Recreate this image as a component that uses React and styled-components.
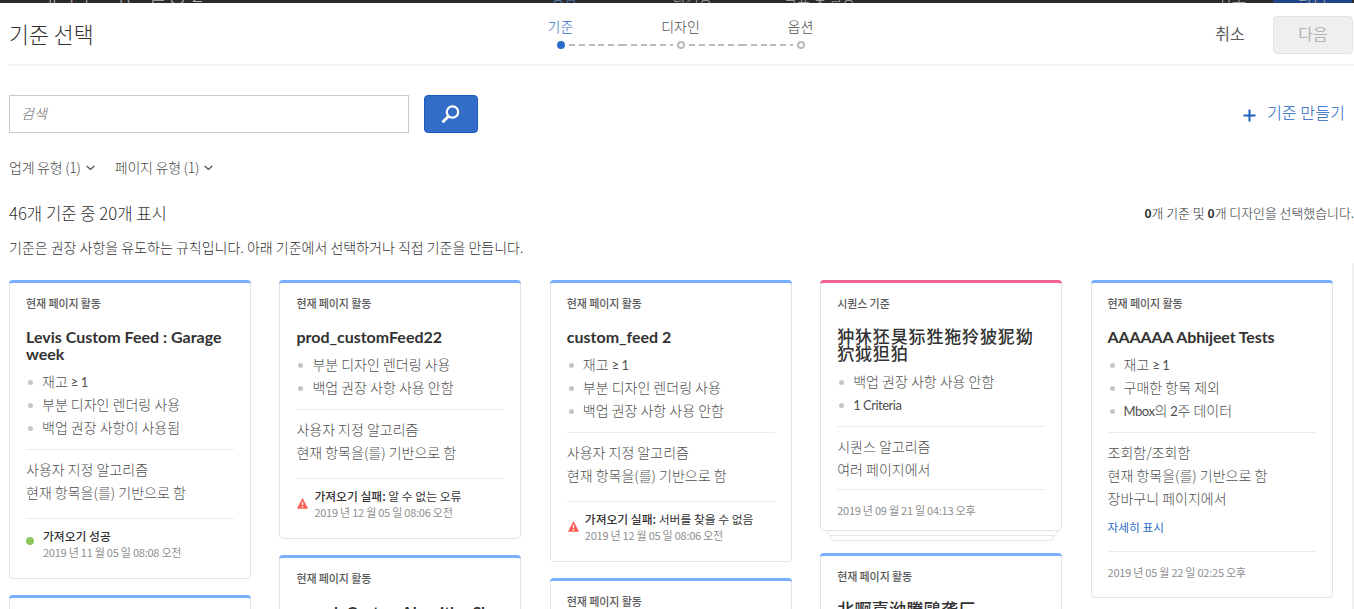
import React from 'react';
import styled, { createGlobalStyle } from 'styled-components';

const Global = createGlobalStyle`
  *, *::before, *::after { box-sizing: border-box; }
  html, body { margin: 0; height: 609px; overflow: hidden; background: #fff; }
  body { font-family: "Noto Sans CJK KR", sans-serif; font-size: 14px; color: #323232; }
`;

const Page = styled.div`
  height: 609px;
  width: 1354px;
  overflow: hidden;
  display: flex;
  flex-direction: column;
`;

const Backdrop = styled.div`
  height: 3px;
  flex: none;
  overflow: hidden;
  background: #2b2b2b;
  display: grid;
  grid-template-rows: 3px;
  grid-template-columns: 38px 513px 122px 111px 433px 56px 79px;
  align-items: end;
`;
const BackdropText = styled.span`
  margin-bottom: -1px;
  font-size: ${(p) => p.$size || 14}px;
  line-height: 1;
  font-weight: 300;
  white-space: nowrap;
  color: ${(p) => (p.$active ? '#5b8fd8' : '#b0b0b0')};
`;
const BackdropButton = styled.div`
  height: 3px;
  overflow: hidden;
  background: #1e4585;
  display: flex;
  align-items: flex-end;
  justify-content: center;
`;

const Header = styled.header`
  height: 63px;
  flex: none;
  margin-left: 9px;
  border-bottom: 2px solid #f3f3f3;
  display: grid;
  grid-template-columns: 1fr 360px 1fr;
`;
const Heading = styled.h1`
  margin: 0;
  font-size: 21.7px;
  font-weight: 300;
  line-height: 62px;
`;
const Steps = styled.ol`
  margin: 0 0 0 -1px;
  padding: 13px 0 0;
  list-style: none;
  display: grid;
  grid-template-columns: repeat(3, 120px);
`;
const Step = styled.li`
  display: flex;
  flex-direction: column;
  align-items: center;
  font-size: 14px;
  line-height: 20px;
  font-weight: 300;
  color: ${(p) => (p.$active ? '#2c6cc9' : '#4b4b4b')};
`;
const Track = styled.div`
  width: 100%;
  height: 8px;
  margin-top: 5px;
  display: grid;
  grid-template-columns: 1fr 8px 1fr;
  align-items: center;
`;
const Dash = styled.span`
  height: 2px;
  margin: ${(p) => (p.$before ? '0 4px 0 0' : '0 0 0 4px')};
  background: ${(p) =>
    p.$hidden ? 'none' : 'repeating-linear-gradient(90deg, #bdbdbd 0 6px, transparent 6px 9.8px)'};
`;
const Dot = styled.span`
  width: 8px;
  height: 8px;
  border-radius: 50%;
  border: 2px solid ${(p) => (p.$active ? '#2c6cc9' : '#b9b9b9')};
  background: ${(p) => (p.$active ? '#2c6cc9' : '#fff')};
`;
const Actions = styled.div`
  display: flex;
  justify-content: flex-end;
  padding: 13px 1px 0 0;
`;
const Button = styled.button`
  height: 38px;
  width: ${(p) => p.$w}px;
  padding: 0 0 4px;
  font-family: inherit;
  font-size: 16px;
  color: ${(p) => (p.$disabled ? '#b3b3b3' : '#5a5a5a')};
  background: ${(p) => (p.$disabled ? '#efefef' : 'transparent')};
  border: 1px solid ${(p) => (p.$disabled ? '#e2e2e2' : 'transparent')};
  border-radius: 4px;
`;

const Toolbar = styled.div`
  height: 38px;
  flex: none;
  margin: 29px 9px 0 9px;
  display: flex;
  align-items: center;
`;
const Search = styled.div`
  width: 400px;
  height: 38px;
  padding-left: 11px;
  border: 1px solid #cacaca;
  line-height: 35px;
  font-size: 14px;
  font-weight: 300;
  font-style: italic;
  color: #6e6e6e;
`;
const SearchButton = styled.button`
  width: 54px;
  height: 38px;
  margin-left: 15px;
  padding: 0;
  border: 1px solid #1d5bbd;
  border-radius: 4px;
  background: #326ec8;
  display: flex;
  align-items: center;
  justify-content: center;
`;
const Create = styled.a`
  margin-left: auto;
  display: flex;
  align-items: center;
  gap: 11px;
  font-size: 16.2px;
  font-weight: 300;
  color: #1d5fc0;
  line-height: 36px;
  margin-top: -4px;
  svg { margin-top: 6px; }
`;

const Filters = styled.div`
  flex: none;
  display: flex;
  gap: 20px;
  height: 20px;
  margin: 24px 0 0 9px;
`;
const Filter = styled.div`
  display: flex;
  align-items: center;
  gap: 5px;
  font-size: 14px;
  font-weight: 300;
  line-height: 20px;
  color: #4b4b4b;
  letter-spacing: -0.25px;
  svg { margin-top: 2px; }
`;
const Summary = styled.div`
  flex: none;
  height: 24px;
  margin: 23px 0 2px 9px;
  display: flex;
  justify-content: space-between;
  align-items: center;
`;
const Count = styled.div`
  font-size: 16.7px;
  font-weight: 300;
  margin-top: 1px;
`;
const Selected = styled.div`
  font-size: 12.9px;
  font-weight: 300;
  b { font-weight: 700; font-size: 12px; }
`;
const Intro = styled.p`
  flex: none;
  margin: 11px 0 0 9px;
  font-size: 14px;
  line-height: 20px;
  font-weight: 300;
`;

const Board = styled.main`
  flex: 1;
  min-height: 0;
  margin-top: 6px;
  padding: 17px 0 0 9px;
  border-right: 2px solid #f0f0f0;
  display: grid;
  grid-template-columns: repeat(5, 242px);
  column-gap: 28.4px;
  align-items: start;
  overflow: hidden;
`;
const Column = styled.div`
  display: flex;
  flex-direction: column;
  gap: ${(p) => p.$gap || 16}px;
`;
const Card = styled.article`
  position: relative;
  border: 1px solid #e4e4e4;
  border-radius: 4px;
  padding: 3px 16px 15px;
  background: #fff;
  height: ${(p) => p.$h}px;
  &::before {
    content: '';
    position: absolute;
    left: -1px;
    right: -1px;
    top: -1px;
    height: 6px;
    border-top: 3px solid ${(p) => (p.$pink ? '#f26590' : '#78adff')};
    border-radius: 4px 4px 0 0;
  }
`;
const Sheets = styled.svg`
  display: block;
  margin: -1px 0 0 5px;
`;
const Stack = styled.div``;
const Kind = styled.div`
  margin-top: 9px;
  font-size: 11px;
  line-height: 20px;
  font-weight: 500;
  letter-spacing: -0.1px;
  color: #5a5a5a;
`;
const Title = styled.h2`
  margin: 15px -10px 0 0;
  font-family: Lato, "Noto Sans CJK KR", sans-serif;
  font-size: ${(p) => p.$size || 16}px;
  line-height: 17px;
  font-weight: ${(p) => p.$weight || 700};
  color: #323232;
  white-space: pre-line;
  letter-spacing: ${(p) => p.$ls || 0}px;
`;
const Rules = styled.ul`
  margin: 7px 0 0;
  padding: 0;
  list-style: none;
`;
const Rule = styled.li`
  display: flex;
  align-items: center;
  height: 23px;
  gap: 9px;
  padding-left: 2px;
  font-size: 14px;
  font-weight: 300;
  color: #4f4f4f;
  &::before {
    content: '';
    width: 5px;
    height: 5px;
    margin-top: 3px;
    border-radius: 50%;
    background: #c6c6c6;
  }
`;
const Latin = styled.span`
  font-family: Lato, sans-serif;
  font-size: 13px;
  font-weight: 400;
  letter-spacing: -0.5px;
`;
const Section = styled.section`
  margin-top: ${(p) => p.$mt || 11}px;
  padding-top: 8px;
  border-top: 1px solid #ebebeb;
`;
const Line = styled.div`
  height: 23px;
  line-height: 22px;
  font-size: 14px;
  font-weight: 300;
  color: #4f4f4f;
`;
const More = styled.a`
  display: block;
  margin-top: 8px;
  padding-bottom: 1px;
  line-height: 18px;
  font-size: 11.7px;
  color: #2c6cc9;
`;
const Status = styled.div`
  display: flex;
  align-items: center;
  gap: ${(p) => p.$gap}px;
`;
const Message = styled.div`
  font-size: 11.8px;
  line-height: 17px;
  font-weight: 400;
  color: #323232;
  b { font-weight: 500; }
`;
const Stamp = styled.div`
  font-size: 11px;
  line-height: 17px;
  margin-top: ${(p) => p.$mt || 0}px;
  font-weight: 400;
  letter-spacing: -0.24px;
  color: #8e8e8e;
`;
const Ok = styled.span`
  width: 8px;
  height: 8px;
  margin-top: -7px;
  border-radius: 50%;
  background: #8dc760;
`;
const Alert = styled.svg`
  margin: -2px 0 0 1px;
`;

const Chevron = () => (
  <svg width="9" height="6" viewBox="0 0 9 6" fill="none" stroke="#555" strokeWidth="1.4">
    <path d="M.7 1 4.5 4.4 8.3 1" />
  </svg>
);
const Warning = () => (
  <Alert width="11" height="11" viewBox="0 0 11 11">
    <path d="M5.5.5 10.6 10.4H.4Z" fill="#fa5d56" stroke="#fa5d56" strokeWidth=".6" strokeLinejoin="round" />
    <path d="M5.5 4v3M5.5 8v1.4" stroke="#fff" strokeWidth="1.3" />
  </Alert>
);

const page = '현재 페이지 활동';
const custom = ['사용자 지정 알고리즘', '현재 항목을(를) 기반으로 함'];

const mixed = (text) =>
  text
    .split(/([A-Za-z0-9≥][A-Za-z0-9≥ ]*)/)
    .map((part, i) => (i % 2 ? <Latin key={i}>{part}</Latin> : part));

function Criteria({ kind = page, title, ls, size, weight, rules, lines, more, status, reason, date, h, pink }) {
  return (
    <Card $h={h} $pink={pink}>
      <Kind>{kind}</Kind>
      {title && <Title $ls={ls} $size={size} $weight={weight}>{title}</Title>}
      {rules && <Rules>{rules.map((r) => <Rule key={r}><span>{mixed(r)}</span></Rule>)}</Rules>}
      {lines && (
        <Section>
          {lines.map((l) => <Line key={l}>{l}</Line>)}
          {more && <More>{more}</More>}
        </Section>
      )}
      {date && (
        <Section $mt={more || status ? 14 : 8}>
          {status ? (
            <Status $gap={reason ? 6 : 9}>
              {reason ? <Warning /> : <Ok />}
              <div>
                <Message><b>{status}</b>{reason && ' ' + reason}</Message>
                <Stamp>{date}</Stamp>
              </div>
            </Status>
          ) : (
            <Stamp $mt={4}>{date}</Stamp>
          )}
        </Section>
      )}
    </Card>
  );
}

export default function App() {
  return (
    <Page>
      <Global />
      <Backdrop>
        <span />
        <BackdropText $size={21}>새 추천 버튼 활동 2</BackdropText>
        <BackdropText $active>경험</BackdropText>
        <BackdropText>타기팅</BackdropText>
        <BackdropText>목표 및 설정</BackdropText>
        <BackdropText $size={16}>취소</BackdropText>
        <BackdropButton><BackdropText $size={16}>다음</BackdropText></BackdropButton>
      </Backdrop>
      <Header>
        <Heading>기준 선택</Heading>
        <Steps>
          <Step $active>기준<Track><Dash $before $hidden /><Dot $active /><Dash /></Track></Step>
          <Step>디자인<Track><Dash $before /><Dot /><Dash /></Track></Step>
          <Step>옵션<Track><Dash $before /><Dot /><Dash $hidden /></Track></Step>
        </Steps>
        <Actions>
          <Button $w={86}>취소</Button>
          <Button $w={80} $disabled>다음</Button>
        </Actions>
      </Header>
      <Toolbar>
        <Search>검색</Search>
        <SearchButton>
          <svg width="20" height="20" viewBox="0 0 20 20" fill="none" stroke="#fff">
            <circle cx="11.5" cy="8" r="5.7" strokeWidth="2.2" />
            <path d="m7.5 12.2-6 6" strokeWidth="2.8" />
          </svg>
        </SearchButton>
        <Create>
          <svg width="13" height="13" viewBox="0 0 13 13" stroke="#1d5fc0" strokeWidth="2"><path d="M6.5.5v12M.5 6.5h12" /></svg>
          기준 만들기
        </Create>
      </Toolbar>
      <Filters>
        <Filter>업계 유형 (1)<Chevron /></Filter>
        <Filter>페이지 유형 (1)<Chevron /></Filter>
      </Filters>
      <Summary>
        <Count>46개 기준 중 20개 표시</Count>
        <Selected><b>0</b>개 기준 및 <b>0</b>개 디자인을 선택했습니다.</Selected>
      </Summary>
      <Intro>기준은 권장 사항을 유도하는 규칙입니다. 아래 기준에서 선택하거나 직접 기준을 만듭니다.</Intro>
      <Board>
        <Column>
          <Criteria h={299} title={'Levis Custom Feed : Garage\nweek'} rules={['재고 ≥ 1', '부분 디자인 렌더링 사용', '백업 권장 사항이 사용됨']} lines={custom} status="가져오기 성공" date="2019 년 11 월 05 일 08:08 오전" />
          <Card $h={200} />
        </Column>
        <Column>
          <Criteria h={259} title="prod_customFeed22" rules={['부분 디자인 렌더링 사용', '백업 권장 사항 사용 안함']} lines={custom} status="가져오기 실패:" reason="알 수 없는 오류" date="2019 년 12 월 05 일 08:06 오전" />
          <Criteria title="sampleCustomAlgorithmSl" h={200} />
        </Column>
        <Column>
          <Criteria h={282} title="custom_feed 2" rules={['재고 ≥ 1', '부분 디자인 렌더링 사용', '백업 권장 사항 사용 안함']} lines={custom} status="가져오기 실패:" reason="서버를 찾을 수 없음" date="2019 년 12 월 05 일 08:06 오전" />
          <Criteria h={200} />
        </Column>
        <Column $gap={12}>
          <Stack>
            <Criteria h={251} pink size={17} weight={500} ls={0.85} kind="시퀀스 기준" title={'狆狇狉狊狋狌狏狑狓狔狕\n狖狘狚狛'} rules={['백업 권장 사항 사용 안함', '1 Criteria']} lines={['시퀀스 알고리즘', '여러 페이지에서']} date="2019 년 09 월 21 일 04:13 오후" />
            <Sheets width="234" height="11" fill="none" stroke="#e4e4e4">
              <path d="M1 .5 4.5 5.5H229.5L233 .5M4.5 5.5 8 10.5H226L229.5 5.5" />
            </Sheets>
          </Stack>
          <Criteria title="北啊嘉泑騰鷗袭厂" size={17} weight={500} ls={0.3} h={200} />
        </Column>
        <Column>
          <Criteria h={318} title="AAAAAA Abhijeet Tests" ls={-0.12} rules={['재고 ≥ 1', '구매한 항목 제외', 'Mbox의 2주 데이터']} lines={['조회함/조회함', '현재 항목을(를) 기반으로 함', '장바구니 페이지에서']} more="자세히 표시" date="2019 년 05 월 22 일 02:25 오후" />
        </Column>
      </Board>
    </Page>
  );
}
